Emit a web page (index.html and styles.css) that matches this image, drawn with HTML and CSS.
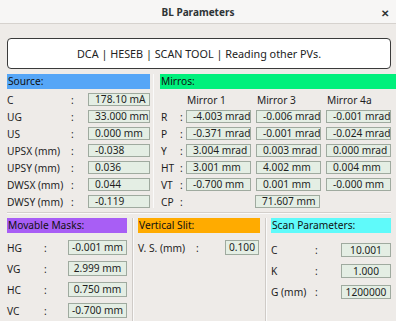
FILE: index.html
```html
<!DOCTYPE html>
<html>
<head>
<meta charset="utf-8">
<link rel="stylesheet" href="styles.css">
</head>
<body>
<div class="window">
  <div class="titlebar">
    <span class="title">BL Parameters</span>
    <span class="close">&#x2715;</span>
  </div>
  <div class="content">
    <div class="banner">DCA | HESEB | SCAN TOOL | Reading other PVs.</div>
    <div class="top">
      <div class="source">
        <div class="hdr hdr-source">Source:</div>
        <div class="srow"><span class="lbl">C</span><span class="colon">:</span><span class="field">178.10 mA</span></div>
        <div class="srow"><span class="lbl">UG</span><span class="colon">:</span><span class="field">33.000 mm</span></div>
        <div class="srow"><span class="lbl">US</span><span class="colon">:</span><span class="field">0.000 mm</span></div>
        <div class="srow"><span class="lbl">UPSX (mm)</span><span class="colon">:</span><span class="field">-0.038</span></div>
        <div class="srow"><span class="lbl">UPSY (mm)</span><span class="colon">:</span><span class="field">0.036</span></div>
        <div class="srow"><span class="lbl">DWSX (mm)</span><span class="colon">:</span><span class="field">0.044</span></div>
        <div class="srow"><span class="lbl">DWSY (mm)</span><span class="colon">:</span><span class="field">-0.119</span></div>
      </div>
      <div class="vsep"></div>
      <div class="mirrors">
        <div class="hdr hdr-mirrors">Mirros:</div>
        <div class="mrow"><span class="mlbl"></span><span class="mcolon"></span><span class="colhead">Mirror 1</span><span class="colhead">Mirror 3</span><span class="colhead">Mirror 4a</span></div>
        <div class="mrow"><span class="mlbl">R</span><span class="mcolon">:</span><span class="field">-4.003 mrad</span><span class="field">-0.006 mrad</span><span class="field">-0.001 mrad</span></div>
        <div class="mrow"><span class="mlbl">P</span><span class="mcolon">:</span><span class="field">-0.371 mrad</span><span class="field">-0.001 mrad</span><span class="field">-0.024 mrad</span></div>
        <div class="mrow"><span class="mlbl">Y</span><span class="mcolon">:</span><span class="field">3.004 mrad</span><span class="field">0.003 mrad</span><span class="field">0.000 mrad</span></div>
        <div class="mrow"><span class="mlbl">HT</span><span class="mcolon">:</span><span class="field">3.001 mm</span><span class="field">4.002 mm</span><span class="field">0.004 mm</span></div>
        <div class="mrow"><span class="mlbl">VT</span><span class="mcolon">:</span><span class="field">-0.700 mm</span><span class="field">0.001 mm</span><span class="field">-0.000 mm</span></div>
        <div class="mrow"><span class="mlbl">CP</span><span class="mcolon">:</span><span class="blank"></span><span class="field">71.607 mm</span><span class="blank"></span></div>
      </div>
    </div>
    <div class="hsep"></div>
    <div class="bottom">
      <div class="masks">
        <div class="hdr hdr-masks">Movable Masks:</div>
        <div class="brow"><span class="blbl">HG</span><span class="bcolon">:</span><span class="field c mfield">-0.001 mm</span></div>
        <div class="brow"><span class="blbl">VG</span><span class="bcolon">:</span><span class="field c mfield">2.999 mm</span></div>
        <div class="brow"><span class="blbl">HC</span><span class="bcolon">:</span><span class="field c mfield">0.750 mm</span></div>
        <div class="brow"><span class="blbl">VC</span><span class="bcolon">:</span><span class="field c mfield">-0.700 mm</span></div>
      </div>
      <div class="vsep2"></div>
      <div class="slit">
        <div class="hdr hdr-slit">Vertical Slit:</div>
        <div class="brow"><span class="vlbl">V. S. (mm)</span><span class="vcolon">:</span><span class="field c vfield">0.100</span></div>
      </div>
      <div class="vsep2"></div>
      <div class="scan">
        <div class="hdr hdr-scan">Scan Parameters:</div>
        <div class="srow2 first"><span class="slbl">C</span><span class="scolon">:</span><span class="field c sfield">10.001</span></div>
        <div class="srow2"><span class="slbl">K</span><span class="scolon">:</span><span class="field c sfield">1.000</span></div>
        <div class="srow2"><span class="slbl">G (mm)</span><span class="scolon">:</span><span class="field c sfield">1200000</span></div>
      </div>
    </div>
  </div>
</div>
</body>
</html>
```
FILE: styles.css
```css
html, body {
  margin: 0;
  padding: 0;
}
body {
  width: 396px;
  height: 321px;
  overflow: hidden;
  background: #eeebe8;
  font-family: "Noto Sans", sans-serif;
  font-size: 10.2px;
  color: #1e1e1e;
}
.window {
  width: 396px;
  height: 321px;
  display: flex;
  flex-direction: column;
}
.titlebar {
  height: 26px;
  background: #f7f6f5;
  border-bottom: 1px solid #d6d2ce;
  display: flex;
  align-items: center;
  justify-content: center;
  position: relative;
}
.title {
  font-family: "Noto Sans", sans-serif;
  font-weight: bold;
  font-size: 10px;
  color: #2e3436;
}
.close {
  position: absolute;
  right: 7px;
  top: 6px;
  font-size: 10px;
  font-weight: bold;
  color: #2e3436;
}
.content {
  padding: 14px 5px 0 7px;
  display: flex;
  flex-direction: column;
}
.banner {
  height: 29px;
  background: #fff;
  border: 1px solid #3a3a3a;
  border-radius: 4px;
  display: flex;
  align-items: center;
  justify-content: center;
  font-family: "Noto Sans", sans-serif;
  font-size: 10.8px;
  color: #222;
}
.top {
  margin-top: 5px;
  display: flex;
}
.hdr {
  height: 15px;
  line-height: 15px;
  padding-left: 1px;
  color: #111;
}
.hdr-source { background: #56a6f7; }
.hdr-mirrors { background: #00f07c; }
.hdr-masks { background: #a85ef5; }
.hdr-slit { background: #ffab00; }
.hdr-scan { background: #5ffafa; }
.source {
  width: 143px;
  display: flex;
  flex-direction: column;
}
.srow {
  height: 13px;
  margin-top: 4px;
  display: flex;
  align-items: center;
}
.lbl { width: 64px; }
.colon { width: 17px; }
.field {
  height: 11px;
  line-height: 11px;
  border: 1px solid #9faa9f;
  background: #e4eee4;
  padding-left: 6px;
  white-space: nowrap;
  overflow: hidden;
  box-sizing: content-box;
}
.srow .field { width: 54px; }
.vsep {
  width: 1px;
  margin-left: 3px;
  margin-right: 6px;
  background: #cfcbc7;
  border-right: 1px solid #fafafa;
  height: 134px;
}
.mirrors {
  flex: 1;
  display: flex;
  flex-direction: column;
}
.mrow {
  height: 13px;
  margin-top: 4px;
  display: flex;
  align-items: center;
}
.mlbl { width: 19px; padding-left: 1px; }
.mcolon { width: 6px; }
.colhead { width: 64px; margin-right: 5px; padding-left: 1px; }
.mrow .field { width: 57px; margin-right: 5px; }
.blank { width: 64px; margin-right: 5px; }
.hsep {
  margin-top: 4px;
  height: 1px;
  background: #d3cfcb;
  border-bottom: 1px solid #fafafa;
}
.bottom {
  margin-top: 4px;
  display: flex;
}
.masks { width: 120px; display: flex; flex-direction: column; }
.slit { width: 122px; display: flex; flex-direction: column; }
.scan { width: 120px; display: flex; flex-direction: column; }
.vsep2 {
  width: 1px;
  background: #cfcbc7;
  border-right: 1px solid #fafafa;
  margin: 0 4px 0 5px;
  height: 103px;
}
.brow {
  height: 15px;
  margin-top: 6px;
  display: flex;
  align-items: center;
}
.masks .brow:nth-child(2), .slit .brow { margin-top: 7px; }
.srow2 {
  height: 14px;
  margin-top: 7px;
  display: flex;
  align-items: center;
}
.srow2.first { margin-top: 10px; }
.field.c { text-align: center; padding: 0; height: 13px; line-height: 13px; }
.srow2 .field.c { height: 12px; line-height: 12px; }
.blbl { width: 37px; }
.bcolon { width: 24px; }
.mfield { width: 57px; }
.vlbl { width: 58px; }
.vcolon { width: 29px; }
.vfield { width: 32px; }
.slbl { width: 44px; }
.scolon { width: 26px; }
.sfield { width: 48px; }
```
